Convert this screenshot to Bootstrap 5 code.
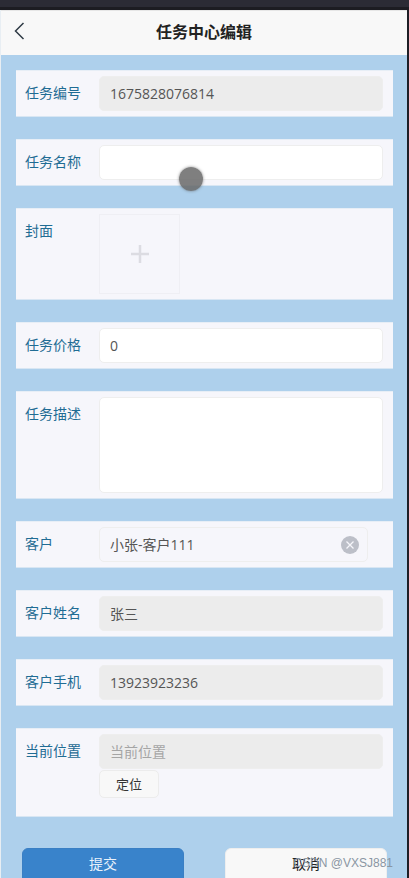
<!DOCTYPE html>
<html lang="zh-CN">
<head>
  <meta charset="UTF-8" />
  <meta name="viewport" content="width=device-width, initial-scale=1.0" />
  <title>任务中心编辑</title>
  <link href="https://cdn.jsdelivr.net/npm/bootstrap@5.3.3/dist/css/bootstrap.min.css" rel="stylesheet">
  <style>
    html, body { height: 878px; overflow: hidden; }
    body {
      background: #1e1e26;
      font-family: "Open Sans", "Noto Sans CJK SC", sans-serif;
      font-size: 14px;
      position: relative;
    }
    .top-strip { height: 7px; background: #2b2b35; }
    .gap-strip { height: 3px; background: #1c1c22; }
    .app-wrap { height: 868px; width: 407px; background: #aed0ec; border-left: 1px solid #e8eef3; overflow: hidden; }
    .head-bar {
      height: 45px;
      background: #f8f8f8;
      border-top: 1px solid #e6e6e6;
    }
    .head-back { left: 13px; top: 10px; }
    .head-title { font-size: 16px; font-weight: 700; color: #222; line-height: 43px; }
    .form-list { padding: 15px 15px 0 15px; gap: 22px; }
    .form-item {
      background: #f6f6fb;
      padding: 5px 10px;
      width: 377px;
      border-top: 1px solid #e7eef6;
      border-bottom: 1px solid #d8e6f3;
    }
    .item-label { width: 73px; flex: none; color: #1f6c94; line-height: 34px; height: 35px; margin-left: -1px; margin-right: 1px; }
    .item-body { width: 284px; flex: none; }
    .item-input {
      height: 35px;
      border: 1px solid #eeeeee;
      border-radius: 5px;
      background: #fff;
      color: #555;
      padding: 0 10px;
      font-size: 14px;
      line-height: 33px;
      box-shadow: none;
    }
    .item-input.is-off { background: #ececec; }
    .item-input.is-hint { color: #a5a5a5; }
    .item-input.is-area { height: 96px; resize: none; }
    .item-input.is-pick { background: #f6f6fb; width: 269px; }
    .clear-dot { width: 18px; height: 18px; border-radius: 50%; background: #bcbfc8; }
    .cover-box {
      width: 81px; height: 80px;
      border: 1px solid #efeff4;
      background: #f6f6fb;
    }
    .locate-btn {
      width: 60px; height: 28px;
      border: 1px solid #ececec;
      border-radius: 5px;
      background: #f8f8f8;
      color: #333;
      font-size: 13px;
      line-height: 26px;
      padding: 0;
      margin-top: 1px;
      margin-bottom: 13px;
    }
    .foot-btns { padding: 31px 20px 0 21px; width: 406px; }
    .send-btn, .back-btn {
      width: 162px; height: 40px;
      border-radius: 6px;
      font-size: 14px;
      line-height: 28px;
      padding: 0 0 8px 0;
    }
    .send-btn { background: #3983cb; border: 1px solid #3a7fc4; color: #e9f2fb; }
    .back-btn { background: #f8f8f8; border: 1px solid #eeeeee; color: #222; }
    .touch-dot {
      position: absolute; left: 179px; top: 167px;
      width: 24px; height: 24px; border-radius: 50%;
      background: rgba(105, 105, 105, .85);
      box-shadow: 0 0 3px rgba(90, 90, 90, .7);
    }
    .mark-text {
      position: absolute; right: 16px; top: 855px;
      color: #8a96a3; font-size: 12px; line-height: 16px;
      font-family: "Liberation Sans", sans-serif;
    }
  </style>
</head>
<body>
  <div class="top-strip"></div>
  <div class="gap-strip"></div>
  <div class="app-wrap">
    <!-- 顶部标题 -->
    <div class="head-bar position-relative text-center">
      <svg class="head-back position-absolute" width="13" height="22" viewBox="0 0 13 22">
        <path d="M9.500 2 L1.500 10 L9.500 18" fill="none" stroke="#2f3a45" stroke-width="1.500"/>
      </svg>
      <div class="head-title">任务中心编辑</div>
    </div>

    <div class="form-list d-flex flex-column">
      <div class="form-item d-flex">
        <div class="item-label">任务编号</div>
        <div class="item-body"><div class="item-input is-off">1675828076814</div></div>
      </div>
      <div class="form-item d-flex">
        <div class="item-label">任务名称</div>
        <div class="item-body"><input type="text" class="form-control item-input"></div>
      </div>
      <div class="form-item d-flex">
        <div class="item-label">封面</div>
        <div class="item-body">
          <div class="cover-box d-flex align-items-center justify-content-center">
            <svg width="20" height="20" viewBox="0 0 20 20"><path d="M10 1 V19 M1 10 H19" stroke="#dcdce2" stroke-width="2.500"/></svg>
          </div>
        </div>
      </div>
      <div class="form-item d-flex">
        <div class="item-label">任务价格</div>
        <div class="item-body"><div class="item-input">0</div></div>
      </div>
      <div class="form-item d-flex">
        <div class="item-label">任务描述</div>
        <div class="item-body"><textarea class="form-control item-input is-area"></textarea></div>
      </div>
      <div class="form-item d-flex">
        <div class="item-label">客户</div>
        <div class="item-body">
          <div class="item-input is-pick d-flex align-items-center justify-content-between pe-2">
            <span>小张-客户111</span>
            <span class="clear-dot d-flex align-items-center justify-content-center">
              <svg width="10" height="10" viewBox="0 0 10 10"><path d="M1.500 1.500 L8.500 8.500 M8.500 1.500 L1.500 8.500" stroke="#f6f6fb" stroke-width="1.300"/></svg>
            </span>
          </div>
        </div>
      </div>
      <div class="form-item d-flex">
        <div class="item-label">客户姓名</div>
        <div class="item-body"><div class="item-input is-off">张三</div></div>
      </div>
      <div class="form-item d-flex">
        <div class="item-label">客户手机</div>
        <div class="item-body"><div class="item-input is-off">13923923236</div></div>
      </div>
      <div class="form-item d-flex">
        <div class="item-label">当前位置</div>
        <div class="item-body">
          <div class="item-input is-off is-hint">当前位置</div>
          <button type="button" class="btn locate-btn d-block">定位</button>
        </div>
      </div>
    </div>

    <div class="foot-btns d-flex justify-content-between">
      <button type="button" class="btn send-btn">提交</button>
      <button type="button" class="btn back-btn">取消</button>
    </div>
  </div>
  <div class="touch-dot"></div>
  <div class="mark-text">CSDN @VXSJ881</div>
</body>
</html>
